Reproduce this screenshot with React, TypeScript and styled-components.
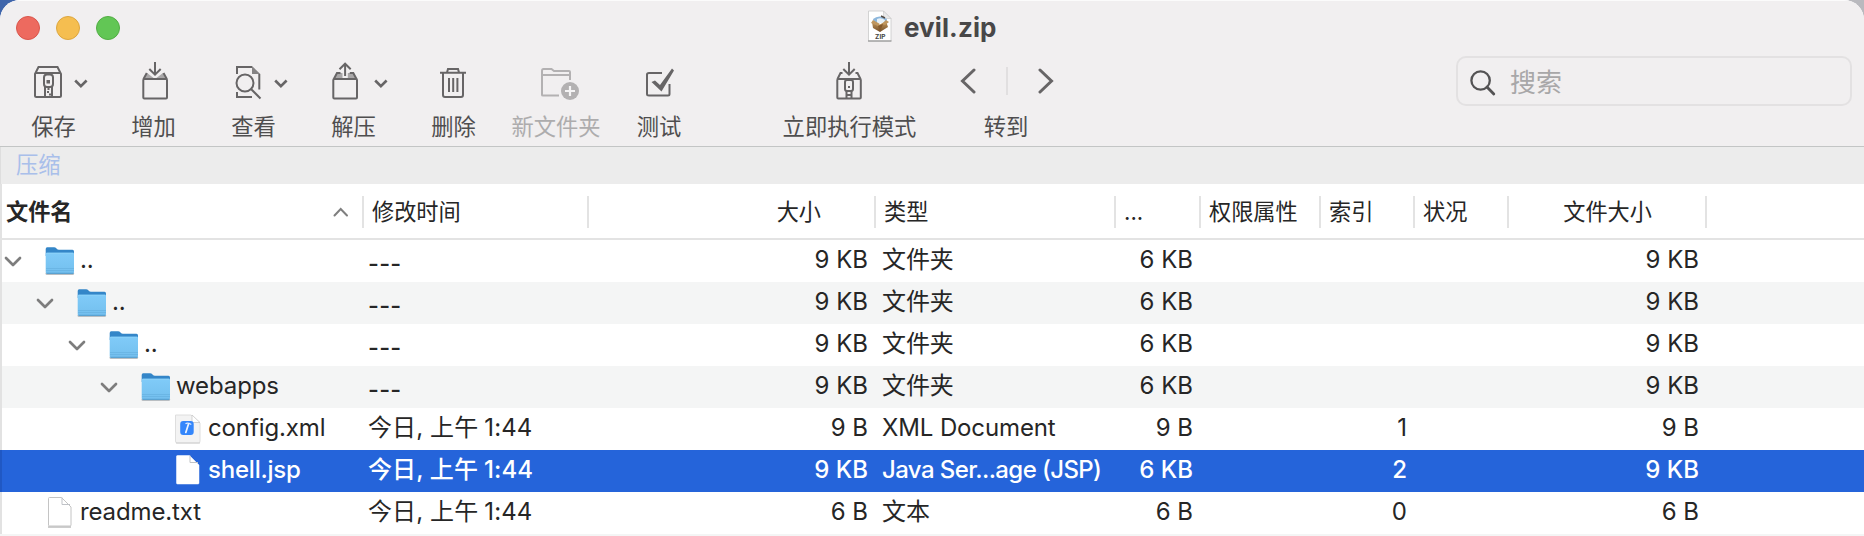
import React from "react";
import styled, { createGlobalStyle, css } from "styled-components";

const GlobalStyle = createGlobalStyle`
  * { box-sizing: border-box; }
  html, body { margin: 0; padding: 0; overflow: hidden; }
  body {
    background: linear-gradient(90deg, #3f65ab 0 50%, #b9b9be 50% 100%);
    font-family: Inter, "Noto Sans CJK SC", sans-serif;
  }
`;

const Window = styled.div`
  width: 1864px;
  height: 536px;
  display: flex;
  flex-direction: column;
  overflow: hidden;
  background: #ffffff;
  border-radius: 20px 20px 0 0;
`;

const Chrome = styled.header`
  height: 147px;
  flex: none;
  display: flex;
  flex-direction: column;
  background: #f1eff0;
  border-bottom: 1px solid #c3c5c5;
  box-shadow: inset 0 1px 0 #fbfbfb;
`;

const TitleBar = styled.div`
  height: 54px;
  display: grid;
  grid-template-columns: 868px auto 1fr;
  align-items: start;
`;

const Lights = styled.div`
  display: flex;
  gap: 16px;
  padding: 16px 0 0 16px;
`;

const Light = styled.span<{ $fill: string; $edge: string }>`
  width: 24px;
  height: 24px;
  border-radius: 50%;
  background: ${(p) => p.$fill};
  border: 1px solid ${(p) => p.$edge};
`;

const Title = styled.h1`
  margin: 0;
  padding-top: 10px;
  display: flex;
  gap: 12px;
  font-size: 26px;
  line-height: 35px;
  font-weight: 700;
  letter-spacing: 0.1px;
  color: #484748;
`;

const ToolbarRow = styled.div`
  flex: 1;
  display: flex;
  padding-left: 4px;
`;

const Tool = styled.button<{ $width: number; $gap?: number; $disabled?: boolean }>`
  width: ${(p) => p.$width}px;
  margin: 0 0 0 ${(p) => p.$gap ?? 0}px;
  padding: 0;
  border: 0;
  background: none;
  display: flex;
  flex-direction: column;
  align-items: center;
  font: 400 22.3px/34px Inter, "Noto Sans CJK SC", sans-serif;
  color: ${(p) => (p.$disabled ? "#adacad" : "#4f4e4f")};

  svg {
    display: block;
    height: 56px;
    flex: none;
    fill: none;
    stroke: ${(p) => (p.$disabled ? "#b3b1b2" : "#676566")};
    stroke-width: 2;
  }
`;

const ToolLabel = styled.span`
  margin-right: 1px;
  white-space: nowrap;
`;

const Search = styled.label`
  width: 396px;
  height: 50px;
  margin: 2px 12px 0 auto;
  display: flex;
  align-items: center;
  border: 2px solid #e3e1e2;
  border-radius: 10px;
  padding-left: 10px;
  gap: 13px;
  font-size: 26px;
  line-height: 46px;
  color: #a8a7a8;
`;

const SearchHint = styled.span`
  padding-top: 3px;
`;

const Body = styled.main`
  flex: 1;
  display: flex;
  flex-direction: column;
`;

const Banner = styled.div`
  height: 37px;
  flex: none;
  background: #ececec;
  padding-left: 15px;
  border-left: 1px solid #dedede;
  font-size: 22.3px;
  line-height: 35px;
  color: #a9bfea;
`;

const COLUMNS = "364px 225px 287px 240px 85px 120px 94px 94px 198px 1fr";

const HeaderRow = styled.div`
  height: 56px;
  flex: none;
  display: grid;
  grid-template-columns: ${COLUMNS};
  padding-top: 12px;
  border-bottom: 2px solid #e3e3e3;
  background: linear-gradient(90deg, #e2e2e2 2px, #ffffff 2px);
`;

const HeaderCell = styled.div<{ $align?: "right"; $strong?: boolean }>`
  height: 32px;
  display: flex;
  align-items: center;
  justify-content: ${(p) => (p.$align ? "flex-end" : "space-between")};
  padding: 0 ${(p) => (p.$align ? 53 : 8)}px 0 8px;
  font-size: 22.2px;
  line-height: 34px;
  color: #262626;
  white-space: nowrap;
  border-right: 2px solid #e3e3e3;
  ${(p) => p.$strong && css`padding-left: 6px; font-weight: 600;`}
  &:last-child { border-right: 0; }
`;

const Row = styled.div<{ $striped?: boolean; $selected?: boolean }>`
  height: 42px;
  flex: none;
  display: grid;
  grid-template-columns: ${COLUMNS};
  align-items: start;
  font-size: 24px;
  line-height: 40px;
  letter-spacing: ${(p) => (p.$selected ? -0.22 : -0.12)}px;
  color: ${(p) => (p.$selected ? "#ffffff" : "#262626")};
  font-weight: ${(p) => (p.$selected ? 500 : 400)};
  background: ${(p) =>
    p.$selected
      ? "linear-gradient(90deg, #2058c4 2px, #2564da 2px)"
      : `linear-gradient(90deg, #e2e2e2 2px, ${p.$striped ? "#f4f5f5" : "#ffffff"} 2px)`};
`;

const Cell = styled.div`
  height: 42px;
  padding: 0 8px 0 6px;
  white-space: nowrap;
`;

const NumberCell = styled(Cell)`
  text-align: right;
  letter-spacing: 0;
`;

const TypeCell = styled(Cell)<{ $tight?: boolean }>`
  ${(p) => p.$tight && css`letter-spacing: -0.6px;`}
`;

const DateCell = styled(Cell)`
  padding-left: 4px;
  letter-spacing: 0.1px;
`;

const Dashes = styled.span`
  display: block;
  padding-top: 4px;
  font-weight: 500;
  font-size: 23.5px;
  letter-spacing: 0.3px;
`;

const Clock = styled.span`
  margin-left: 6px;
`;

const NameCell = styled.div<{ $level: number }>`
  height: 42px;
  display: flex;
  align-items: flex-start;
  padding-left: ${(p) => p.$level * 32}px;
`;

const Disclosure = styled.span`
  width: 44px;
  height: 42px;
  flex: none;
`;

const FileIcon = styled.span`
  width: 36px;
  height: 42px;
  flex: none;
  svg { display: block; }
`;

const NextRow = styled.div`
  flex: 1;
  background: #f4f5f5;
`;

const Chevron = ({ x }: { x: number }) => (
  <path d={`M${x} 26.5l5.7 5.7 5.7-5.7`} strokeWidth="2.6" />
);

const SaveIcon = () => (
  <svg width="100" viewBox="0 0 100 56">
    <path d="M31 20L34.5 13H53.5L57 20V41.5Q57 43 55.500 43H32.500Q31 43 31 41.500ZM31 19H57" />
    <rect x="40" y="20.500" width="9" height="12.500" rx="3" />
    <rect x="42.500" y="26" width="3.500" height="3.500" fill="#676566" stroke="none" />
    <path d="M41 33V43M48 33V43M44.500 33v3M43 38h2M45 40.500h2M43 43h2" />
    <Chevron x={71.2} />
  </svg>
);

const AddIcon = () => (
  <svg width="100" viewBox="0 0 100 56">
    <path d="M43 19L51 25H40ZM59 19L51 25H62Z" fill="#a9a7a8" stroke="none" />
    <path d="M39.500 25L42.800 19M62.800 25L59.500 19" />
    <rect x="39.300" y="25" width="23.700" height="19.500" rx="1" />
    <path d="M51 8V20M45.300 15L51 20.700L56.700 15" />
  </svg>
);

const ViewIcon = () => (
  <svg width="100" viewBox="0 0 100 56">
    <path d="M33 20V13H48M55.300 20V35.500M33 38V43H48" />
    <path d="M48 12L56.300 20H48Z" fill="#858384" stroke="none" />
    <circle cx="41" cy="29" r="8.500" />
    <path d="M47 35L56.500 44.500" />
    <Chevron x={71.2} />
  </svg>
);

const ExtractIcon = () => (
  <svg width="100" viewBox="0 0 100 56">
    <path d="M33 19H38.500V25H30ZM43.800 19H49.500L52.500 25H43.800Z" fill="#a9a7a8" stroke="none" />
    <path d="M29.800 25L33 19H36.500M52.500 25L49.300 19H45.800" />
    <rect x="29.300" y="25" width="23.700" height="19.500" rx="1" />
    <path d="M41.100 22V9.500M35.500 15.200L41.100 9.700L46.700 15.200" />
    <Chevron x={71.2} />
  </svg>
);

const TrashIcon = () => (
  <svg width="100" viewBox="0 0 100 56">
    <path d="M36 18.700H62M43 18.500L44 15H54L55 18.500M39 19V41Q39 43 41 43H57Q59 43 59 41V19M45 24V38M49.200 24V38M53.400 24V38" />
  </svg>
);

const NewFolderIcon = () => (
  <svg width="105" viewBox="0 0 105 56">
    <path d="M66 26V18Q66 17 65 17H50L47.500 15H39.500Q38 15 38 17V41Q38 41.500 39 41.500H55M38 21H66" />
    <circle cx="66" cy="37" r="9" fill="#b3b1b2" stroke="none" />
    <path d="M61 37H71M66 32V42" stroke="#f5f4f5" strokeWidth="2.200" />
  </svg>
);

const TestIcon = () => (
  <svg width="101" viewBox="0 0 101 56">
    <path d="M53 19H40Q38 19 38 20.500V40Q38 41.500 40 41.500H59Q60.500 41.500 60.500 40V30" />
    <path d="M42.500 28L46 26.500L51 31L63 14.500L65 16.500L52.500 37.500Z" fill="#676566" stroke="none" />
  </svg>
);

const ExecuteIcon = () => (
  <svg width="160" viewBox="0 0 160 56">
    <path d="M67.500 25L70.500 19H72.500M90.500 25L87.500 19H85.500M79 8V20M73.300 15L79 20.700L84.700 15" />
    <rect x="67.300" y="25" width="23.500" height="19.500" rx="1" />
    <rect x="75" y="26" width="8" height="11" rx="2" />
    <path d="M76.500 37V44M81.500 37V44M76.500 41H81.500" />
    <rect x="78" y="32" width="2" height="2" fill="#676566" stroke="none" />
  </svg>
);

const NavIcon = () => (
  <svg width="153" viewBox="0 0 153 56">
    <path d="M44 16L32.500 27L44 38M110 16L121.500 27L110 38" strokeWidth="3" strokeLinecap="round" />
    <path d="M77 13V41" stroke="#e1dfe0" />
  </svg>
);

const TOOLS: { label: string; icon: React.ReactNode; width: number; gap?: number; disabled?: boolean }[] = [
  { label: "保存", icon: <SaveIcon />, width: 100 },
  { label: "增加", icon: <AddIcon />, width: 100 },
  { label: "查看", icon: <ViewIcon />, width: 100 },
  { label: "解压", icon: <ExtractIcon />, width: 100 },
  { label: "删除", icon: <TrashIcon />, width: 100 },
  { label: "新文件夹", icon: <NewFolderIcon />, width: 105, disabled: true },
  { label: "测试", icon: <TestIcon />, width: 101 },
  { label: "立即执行模式", icon: <ExecuteIcon />, width: 160, gap: 60 },
  { label: "转到", icon: <NavIcon />, width: 153 },
];

const ZipIcon = () => (
  <svg width="24" height="32" viewBox="0 0 24 32">
    <defs>
      <linearGradient id="zipBox" x1="0" y1="0" x2="0" y2="1">
        <stop offset="0" stopColor="#c69a5c" />
        <stop offset="1" stopColor="#76502a" />
      </linearGradient>
    </defs>
    <path d="M.5 1H15.500L23 8.500V31H.5Z" fill="#fff" stroke="#c9c9c9" strokeWidth=".8" />
    <path d="M0 31H23.500" stroke="#9b9b9b" strokeWidth="1.300" />
    <path d="M15.500 1V8.500H23Z" fill="#e9e9e9" stroke="#c6c6c6" strokeWidth=".6" />
    <path d="M5 9Q11 4 19 9L18 13H6Z" fill="#8db7dc" />
    <path d="M9 9Q13 7 17 10L16 13H9Z" fill="#e8f1f7" />
    <path d="M4 12L11 15L18 11L20 17L12 22L5 18Z" fill="url(#zipBox)" />
    <path d="M3 13L10 16L12 14L5 10ZM18 10L21 12L17 15L14 14Z" fill="#bf965e" />
    <path d="M10 16L12 22L15 14" fill="#855a2c" />
    <path d="M13 6L17 8" stroke="#514b45" strokeWidth="1.500" />
    <text x="12.300" y="28.600" textAnchor="middle" fontFamily="Inter" fontSize="6.500" fontWeight="700" fill="#454545">ZIP</text>
  </svg>
);

const FolderIcon = () => (
  <svg width="34" height="42" viewBox="0 0 34 42">
    <defs>
      <linearGradient id="folderFront" x1="0" y1="0" x2="0" y2="1">
        <stop offset="0" stopColor="#80cbf8" />
        <stop offset="1" stopColor="#73bfee" />
      </linearGradient>
    </defs>
    <rect x="1.500" y="32" width="28.600" height="3" rx="1.500" fill="#b9bec2" />
    <path d="M1.700 9Q1.700 7.300 3.200 7.300H10Q11.500 7.300 12.500 8.500Q13.500 9.800 15 9.800H28.500Q30 9.800 30 11.500V16H1.700Z" fill="#3486c8" />
    <path d="M1.700 14Q1.700 12.800 3 12.800H28.700Q30 12.800 30 14V32Q30 33.700 28.500 33.700H3.200Q1.700 33.700 1.700 32Z" fill="url(#folderFront)" />
    <path d="M2.500 13.200H29.500" stroke="#91d5fa" strokeWidth=".8" />
    <path d="M2 28.500H30M2 30.500H30" stroke="#65b0df" strokeWidth=".7" />
    <path d="M2.500 33.300H29.500" stroke="#519bcc" />
  </svg>
);

const PageIcon = ({ selected }: { selected?: boolean }) => (
  <svg width="34" height="42" viewBox="0 0 34 42">
    {!selected && <path d="M4 35H27" stroke="#bdbdbd" strokeWidth="1.500" />}
    <path
      d="M6 5.500H18L27.500 15V33Q27.500 34 26.500 34H6Q5 34 5 33V6.500Q5 5.500 6 5.500Z"
      transform="translate(-.5 0)"
      fill="#fff"
      stroke={selected ? "#fff" : "#c4c4c4"}
      strokeWidth={selected ? 0.5 : 1}
    />
    <path d="M18 5.500V12.500H26" fill="none" stroke="#bfc2c7" />
  </svg>
);

const XmlIcon = () => (
  <svg width="34" height="42" viewBox="0 0 34 42">
    <path d="M4 7H19L28 15V33Q28 35 26.500 35H5Q3.500 35 3.500 33V7Z" fill="#f3f3f3" stroke="#dedede" />
    <path d="M4 35H28" stroke="#cfcfcf" />
    <path d="M20 7V14.500H28Z" fill="#fff" stroke="#c8c8c8" strokeWidth=".8" />
    <rect x="8.200" y="13" width="13.500" height="14" rx="3" fill="#3486fb" />
    <path d="M13.500 15.800Q15.500 14.200 19.300 16.500" stroke="#d5e6ff" strokeWidth="1.300" fill="none" />
    <path d="M16.500 16L13.800 24.500" stroke="#edf5ff" strokeWidth="1.700" strokeLinecap="round" />
  </svg>
);

type Kind = "folder" | "xml" | "page";
interface Entry {
  name: string;
  level: number;
  kind: Kind;
  time?: string;
  size: string;
  type: string;
  packed: string;
  index?: string;
  selected?: boolean;
}

const folder = (name: string, level: number): Entry => ({
  name, level, kind: "folder", size: "9 KB", type: "文件夹", packed: "6 KB",
});

const ENTRIES: Entry[] = [
  folder("..", 0),
  folder("..", 1),
  folder("..", 2),
  folder("webapps", 3),
  { name: "config.xml", level: 4, kind: "xml", time: "1:44", size: "9 B", type: "XML Document", packed: "9 B", index: "1" },
  { name: "shell.jsp", level: 4, kind: "page", time: "1:44", size: "9 KB", type: "Java Ser...age (JSP)", packed: "6 KB", index: "2", selected: true },
  { name: "readme.txt", level: 0, kind: "page", time: "1:44", size: "6 B", type: "文本", packed: "6 B", index: "0" },
];

const EntryRow = ({ entry, striped }: { entry: Entry; striped: boolean }) => (
  <Row $striped={striped} $selected={entry.selected}>
    <NameCell $level={entry.level}>
      <Disclosure>
        {entry.kind === "folder" && (
          <svg width="44" height="42" viewBox="0 0 44 42">
            <path d="M6 18L13 25L20 18" fill="none" stroke="#7d7d7d" strokeWidth="2.700" strokeLinecap="round" strokeLinejoin="round" />
          </svg>
        )}
      </Disclosure>
      <FileIcon>
        {entry.kind === "folder" && <FolderIcon />}
        {entry.kind === "xml" && <XmlIcon />}
        {entry.kind === "page" && <PageIcon selected={entry.selected} />}
      </FileIcon>
      {entry.name}
    </NameCell>
    <DateCell>
      {entry.time ? <>今日, 上午<Clock>{entry.time}</Clock></> : <Dashes>---</Dashes>}
    </DateCell>
    <NumberCell>{entry.size}</NumberCell>
    <TypeCell $tight={entry.selected}>{entry.type}</TypeCell>
    <NumberCell>{entry.packed}</NumberCell>
    <Cell />
    <NumberCell>{entry.index}</NumberCell>
    <Cell />
    <NumberCell>{entry.size}</NumberCell>
    <Cell />
  </Row>
);

export default function App() {
  return (
    <>
      <GlobalStyle />
      <Window>
        <Chrome>
          <TitleBar>
            <Lights>
              <Light $fill="#ed6a5f" $edge="#d9564c" />
              <Light $fill="#f5be50" $edge="#dca63f" />
              <Light $fill="#62c655" $edge="#52ad44" />
            </Lights>
            <Title>
              <ZipIcon />
              evil.zip
            </Title>
          </TitleBar>
          <ToolbarRow>
            {TOOLS.map((t) => (
              <Tool key={t.label} $width={t.width} $gap={t.gap} $disabled={t.disabled}>
                {t.icon}
                <ToolLabel>{t.label}</ToolLabel>
              </Tool>
            ))}
            <Search>
              <svg width="29" height="30" viewBox="0 0 29 30" fill="none" stroke="#545354" strokeWidth="2.300" strokeLinecap="round">
                <circle cx="12.600" cy="14.500" r="9.200" />
                <path d="M19 21L25.800 28" strokeWidth="2.800" />
              </svg>
              <SearchHint>搜索</SearchHint>
            </Search>
          </ToolbarRow>
        </Chrome>
        <Body>
          <Banner>压缩</Banner>
          <HeaderRow>
            <HeaderCell $strong>
              文件名
              <svg width="26" height="20" viewBox="0 0 26 20">
                <path d="M6.500 13.500L12.700 7L19 13.500" fill="none" stroke="#7f7f7f" strokeWidth="2" strokeLinecap="round" />
              </svg>
            </HeaderCell>
            <HeaderCell>修改时间</HeaderCell>
            <HeaderCell $align="right">大小</HeaderCell>
            <HeaderCell>类型</HeaderCell>
            <HeaderCell>...</HeaderCell>
            <HeaderCell>权限属性</HeaderCell>
            <HeaderCell>索引</HeaderCell>
            <HeaderCell>状况</HeaderCell>
            <HeaderCell $align="right">文件大小</HeaderCell>
            <HeaderCell />
          </HeaderRow>
          {ENTRIES.map((entry, i) => (
            <EntryRow key={i} entry={entry} striped={i % 2 === 1} />
          ))}
          <NextRow />
        </Body>
      </Window>
    </>
  );
}
